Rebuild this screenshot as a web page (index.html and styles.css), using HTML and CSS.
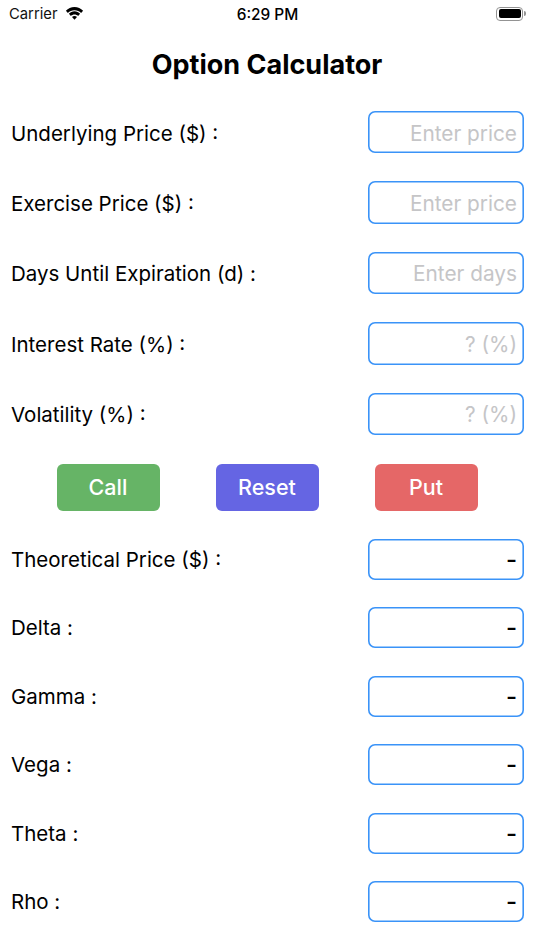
FILE: index.html
```html
<!DOCTYPE html>
<html lang="en">
<head>
<meta charset="utf-8">
<title>Option Calculator</title>
<link rel="stylesheet" href="styles.css">
</head>
<body>
<div class="status">
  <div class="status-left">
    <span class="carrier">Carrier</span>
    <svg class="wifi" width="19" height="14" viewBox="0 0 19 14"><path d="M9.500 3.200c2.600 0 4.900 1 6.600 2.700l2-2.100C15.900 1.500 12.900 0 9.500 0S3.100 1.500.9 3.800l2 2.100C4.600 4.200 6.900 3.200 9.500 3.200z"/><path d="M9.500 7.400c1.400 0 2.700.5 3.600 1.500l2-2.100C13.700 5.300 11.700 4.300 9.500 4.300S5.300 5.300 3.900 6.800l2 2.100c.9-1 2.200-1.500 3.600-1.500z"/><path d="M9.500 9c-1 0-1.900.4-2.500 1l2.500 2.800L12 10c-.6-.6-1.500-1-2.500-1z"/></svg>
  </div>
  <span class="time">6:29 PM</span>
  <div class="battery"><span class="battery-body"><span class="battery-fill"></span></span><span class="battery-cap"></span></div>
</div>
<h1 class="title">Option Calculator</h1>
<div class="inputs">
  <div class="row"><span class="label">Underlying Price ($) :</span><div class="field placeholder">Enter price</div></div>
  <div class="row"><span class="label">Exercise Price ($) :</span><div class="field placeholder">Enter price</div></div>
  <div class="row"><span class="label">Days Until Expiration (d) :</span><div class="field placeholder">Enter days</div></div>
  <div class="row"><span class="label">Interest Rate (%) :</span><div class="field placeholder">? (%)</div></div>
  <div class="row"><span class="label">Volatility (%) :</span><div class="field placeholder">? (%)</div></div>
</div>
<div class="actions">
  <div class="btn call">Call</div>
  <div class="btn reset">Reset</div>
  <div class="btn put">Put</div>
</div>
<div class="outputs">
  <div class="row out"><span class="label">Theoretical Price ($) :</span><div class="field">-</div></div>
  <div class="row out"><span class="label">Delta :</span><div class="field">-</div></div>
  <div class="row out"><span class="label">Gamma :</span><div class="field">-</div></div>
  <div class="row out"><span class="label">Vega :</span><div class="field">-</div></div>
  <div class="row out"><span class="label">Theta :</span><div class="field">-</div></div>
  <div class="row out"><span class="label">Rho :</span><div class="field">-</div></div>
</div>
</body>
</html>
```
FILE: styles.css
```css
* { box-sizing: border-box; }
html, body { margin: 0; padding: 0; }
body {
  width: 534px;
  height: 950px;
  overflow: hidden;
  background: #fff;
  color: #000;
  font-family: Inter, "Liberation Sans", sans-serif;
}
.status {
  height: 28px;
  display: grid;
  grid-template-columns: 1fr auto 1fr;
  align-items: center;
  padding: 0 8px 0 9px;
}
.status-left { display: flex; align-items: center; gap: 7px; }
.carrier { font-size: 14.800px; color: #111; }
.wifi { fill: #000; margin-top: -1px; }
.time { font-size: 15.400px; font-weight: 500; }
.battery { justify-self: end; display: flex; align-items: center; margin-top: -1px; }
.battery-body {
  width: 27px;
  height: 14px;
  border: 1px solid #939393;
  border-radius: 4px;
  padding: 1.500px;
  display: block;
}
.battery-fill { display: block; height: 100%; background: #000; border-radius: 2px; }
.battery-cap { width: 2px; height: 5px; background: #939393; border-radius: 0 2px 2px 0; margin-left: 1px; }
.title {
  margin: 20px 0 0;
  height: 32px;
  line-height: 32px;
  font-size: 27px;
  font-weight: 700;
  text-align: center;
  position: relative;
  top: 1px;
}
.inputs {
  margin: 31px 10px 0 11px;
  display: flex;
  flex-direction: column;
  gap: 28px;
}
.row {
  height: 42.400px;
  display: flex;
  align-items: center;
  justify-content: space-between;
}
.label { font-size: 20.500px; padding-top: 2px; }
.field {
  width: 156px;
  height: 100%;
  border-radius: 7px;
  box-shadow: inset 0 0 0 1.600px #3a93f8;
  padding: 2px 7px 0;
  display: flex;
  align-items: center;
  justify-content: flex-end;
  font-size: 20.800px;
}
.placeholder { color: #c5c5c7; }
.actions {
  margin: 29px 56.500px 0;
  display: flex;
  justify-content: space-between;
}
.btn {
  width: 103px;
  height: 47px;
  border-radius: 6px;
  color: #fff;
  font-size: 21.500px;
  font-weight: 500;
  display: flex;
  align-items: center;
  justify-content: center;
}
.call { background: #66b466; }
.reset { background: #6565e3; }
.put { background: #e56767; }
.outputs {
  margin: 28px 10px 0 11px;
  display: flex;
  flex-direction: column;
  gap: 27.400px;
}
.out { height: 41px; }
.out .label { padding-top: 0; }
.out .field { padding-top: 0; font-weight: 500; font-size: 24px; }
```
